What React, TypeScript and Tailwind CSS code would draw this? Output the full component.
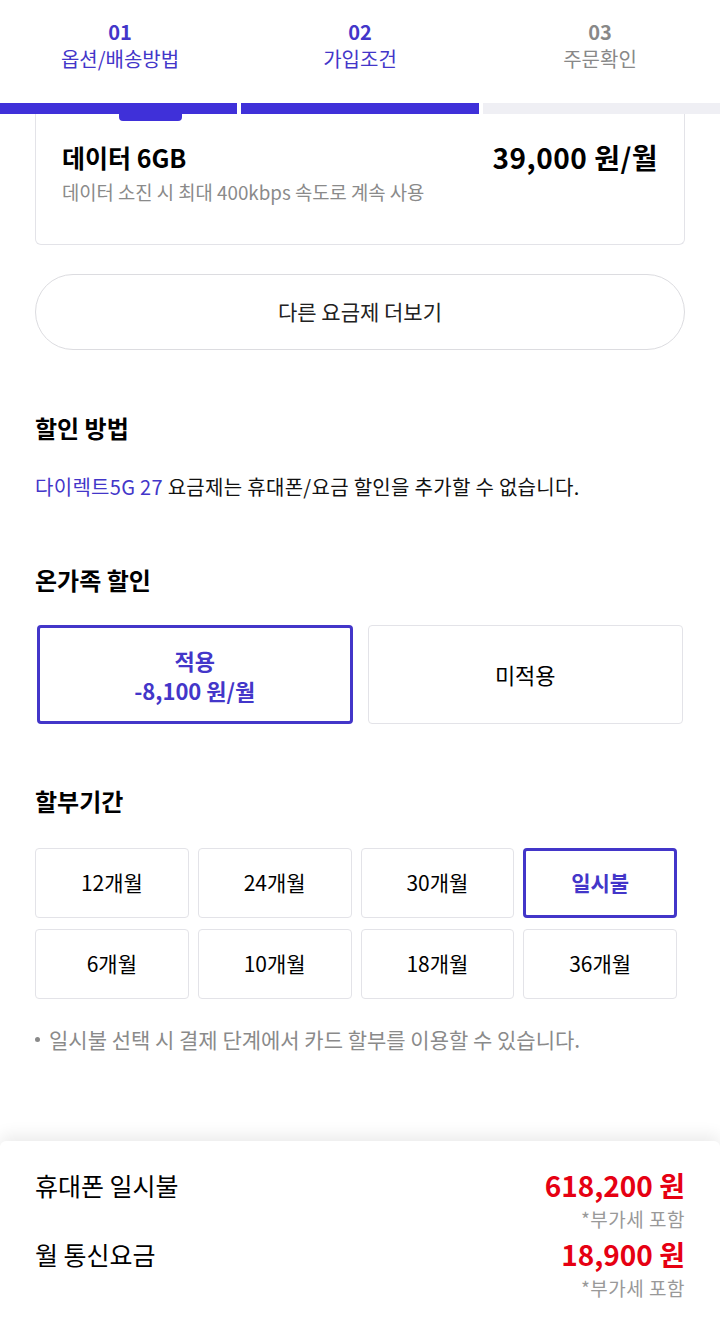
const steps = [
  { no: '01', label: '옵션/배송방법', active: true },
  { no: '02', label: '가입조건', active: true },
  { no: '03', label: '주문확인', active: false },
];

const periods = ['12개월', '24개월', '30개월', '일시불', '6개월', '10개월', '18개월', '36개월'];

const font = "font-['Noto_Sans_CJK_KR','Noto_Sans',sans-serif]";

export default function App() {
  return (
    <div className={`${font} flex min-h-[1323px] w-[720px] flex-col bg-white text-black`}>
      {/* step header */}
      <div className="flex h-[103px] pt-[18px]">
        {steps.map((s) => (
          <div
            key={s.no}
            className={`flex flex-1 flex-col items-center ${s.active ? 'text-[#4336c9]' : 'text-[#888888]'}`}
          >
            <span className="text-[20px] font-bold leading-[28px]">{s.no}</span>
            <span className="text-[20px] leading-[26px]">{s.label}</span>
          </div>
        ))}
      </div>
      <div className="flex h-[11px] gap-[4px]">
        <div className="flex-1 bg-[#3f30d9]" />
        <div className="flex-1 bg-[#3f30d9]" />
        <div className="flex-1 bg-[#efeff4]" />
      </div>

      <div className="px-[35px]">
        {/* plan card */}
        <div className="rounded-b-[6px] border border-t-0 border-[#e3e3e8] px-[26px] pb-[39px]">
          <div className="ml-[57px] h-[7px] w-[63px] rounded-b-[4px] bg-[#3f30d9]" />
          <div className="mt-[20px] flex items-start justify-between">
            <span className="text-[25px] font-bold leading-[32px]">데이터 6GB</span>
            <span className="text-[28px] font-bold leading-[32px] tracking-[0.5px]">39,000 원/월</span>
          </div>
          <p className="mt-[6px] text-[18.8px] leading-[26px] text-[#8a8a8a]">
            데이터 소진 시 최대 400kbps 속도로 계속 사용
          </p>
        </div>

        <button className="mt-[29px] flex h-[76px] w-full items-center justify-center rounded-full border border-[#dcdce0] text-[21px] text-[#222]">
          다른 요금제 더보기
        </button>

        <h2 className="mt-[62px] text-[24px] font-bold leading-[32px]">할인 방법</h2>
        <p className="mt-[29px] text-[20px] leading-[28px] tracking-[0.3px] text-[#111]">
          <span className="text-[#4336c9]">다이렉트5G 27</span> 요금제는 휴대폰/요금 할인을 추가할 수 없습니다.
        </p>

        <h2 className="mt-[63px] text-[24px] font-bold leading-[32px]">온가족 할인</h2>
        <div className="mt-[29px] grid grid-cols-2 gap-[15px] px-[2px]">
          <div className="flex h-[99px] flex-col items-center justify-center rounded-[4px] border-[3px] border-[#4336c9] text-[22px] font-bold leading-[30px] text-[#4336c9]">
            <span>적용</span>
            <span>-8,100 원/월</span>
          </div>
          <div className="flex h-[99px] items-center justify-center rounded-[4px] border border-[#e3e3e8] text-[22px]">
            미적용
          </div>
        </div>

        <h2 className="mt-[61px] text-[24px] font-bold leading-[32px]">할부기간</h2>
        <div className="mt-[31px] grid w-[642px] grid-cols-4 gap-x-[9px] gap-y-[11px]">
          {periods.map((p) => {
            const on = p === '일시불';
            return (
              <div
                key={p}
                className={`flex h-[70px] items-center justify-center rounded-[4px] text-[21px] ${
                  on ? 'border-[3px] border-[#4336c9] font-bold text-[#4336c9]' : 'border border-[#e3e3e8]'
                }`}
              >
                {p}
              </div>
            );
          })}
        </div>
        <p className="mt-[26px] flex items-center gap-[9px] text-[21px] leading-[28px] text-[#8a8a8a]">
          <span className="h-[5px] w-[5px] shrink-0 rounded-full bg-[#8a8a8a]" />
          일시불 선택 시 결제 단계에서 카드 할부를 이용할 수 있습니다.
        </p>
      </div>

      {/* bottom summary */}
      <div className="mt-auto rounded-t-[6px] bg-white px-[35px] pt-[29px] pb-[23px] shadow-[0_-6px_16px_rgba(0,0,0,0.08)]">
        {[
          { label: '휴대폰 일시불', price: '618,200 원' },
          { label: '월 통신요금', price: '18,900 원' },
        ].map((r, i) => (
          <div key={r.label} className={`flex items-start justify-between ${i > 0 ? 'mt-[8px]' : ''}`}>
            <span className="text-[25px] leading-[30px]">{r.label}</span>
            <div className="flex flex-col items-end">
              <span className="text-[28px] font-bold leading-[30px] text-[#e60012]">{r.price}</span>
              <span className="mt-[7px] text-[19px] leading-[24px] tracking-[0.5px] text-[#999]">*부가세 포함</span>
            </div>
          </div>
        ))}
      </div>
    </div>
  );
}
